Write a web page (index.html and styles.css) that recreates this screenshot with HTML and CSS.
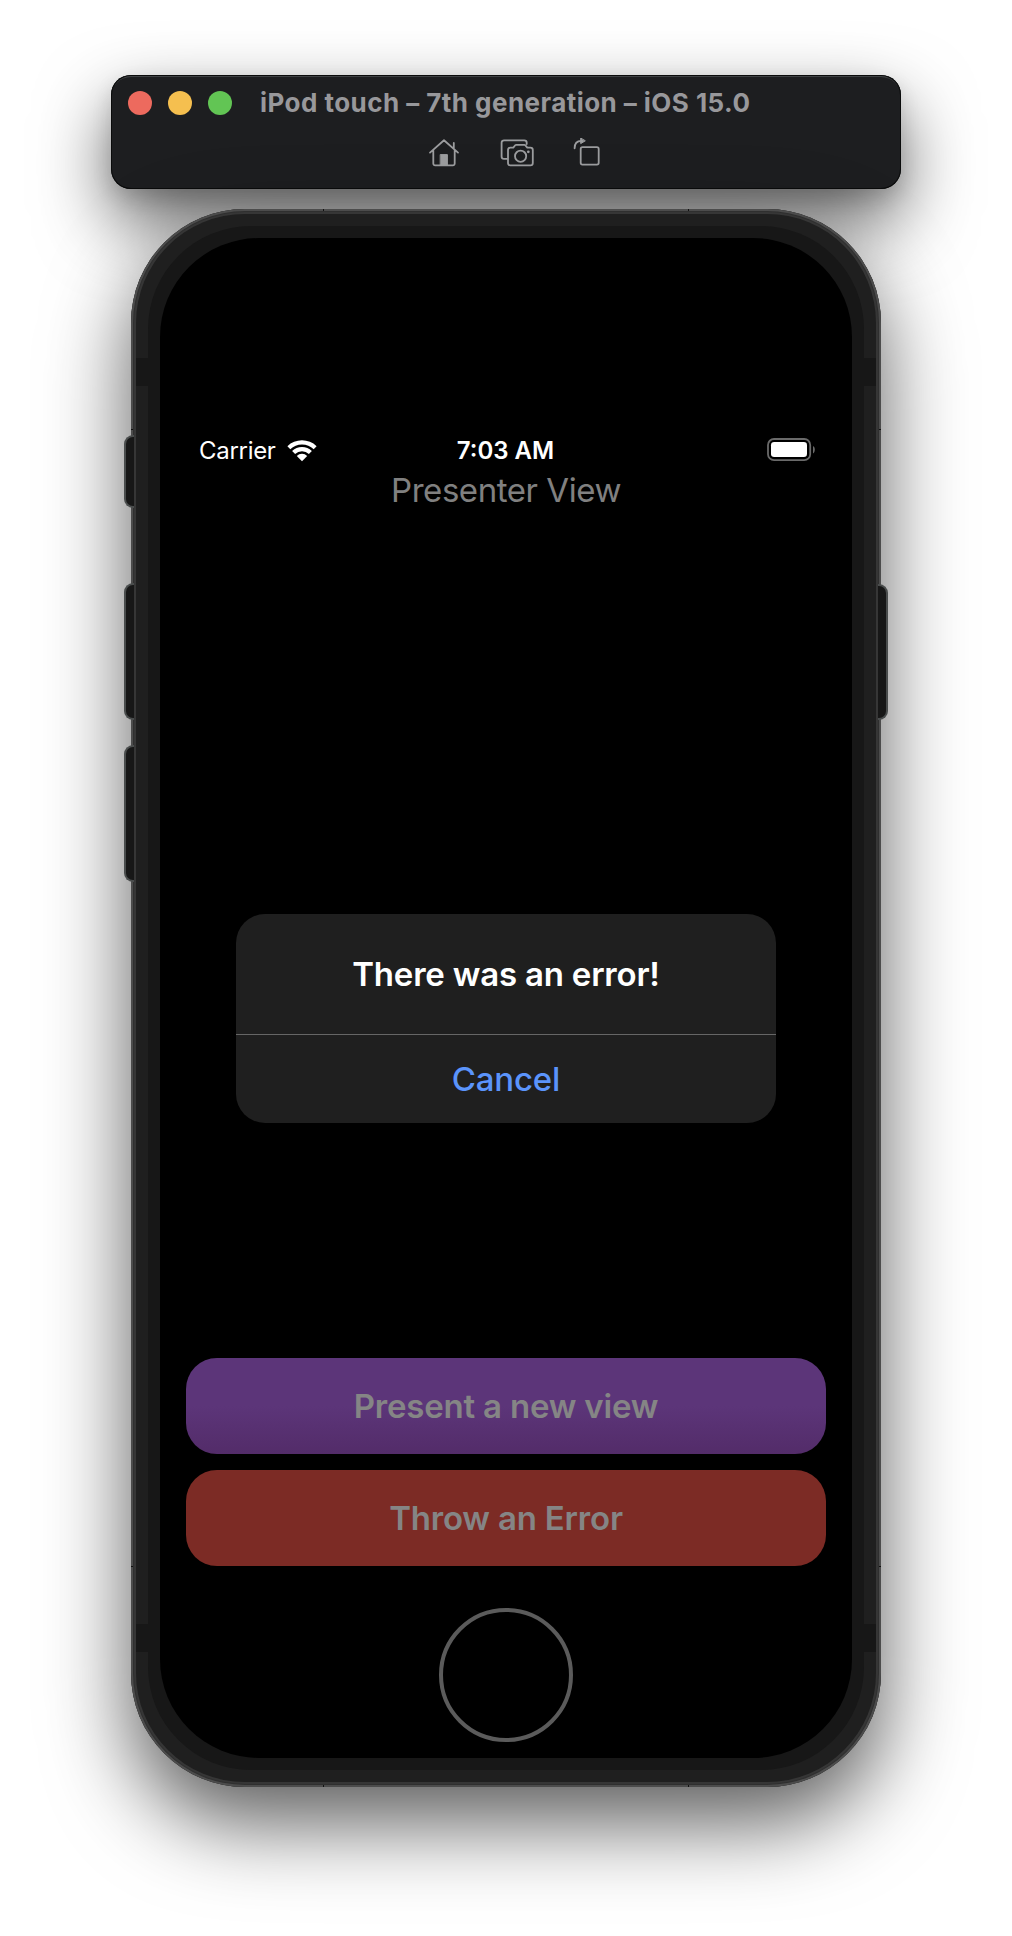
FILE: index.html
```html
<!DOCTYPE html>
<html lang="en">
<head>
<meta charset="utf-8">
<title>iPod touch – 7th generation – iOS 15.0</title>
<link rel="stylesheet" href="styles.css">
</head>
<body>
<main class="simulator">
  <header class="toolbar">
    <div class="title-row">
      <div class="lights">
        <span class="light light-close"></span>
        <span class="light light-minimize"></span>
        <span class="light light-zoom"></span>
      </div>
      <h1 class="window-title">iPod touch – 7th generation – iOS 15.0</h1>
    </div>
    <div class="tools">
      <svg class="tool" width="32" height="30" viewBox="0 0 32 30" fill="none" stroke="#9c9d9f" stroke-width="1.8" stroke-linecap="round" stroke-linejoin="round">
        <path d="M2 14.6 16 2.3 30 14.6M5.3 12.2V25.6a1.8 1.8 0 0 0 1.8 1.8H24.9a1.8 1.8 0 0 0 1.8-1.8V12.2M25.8 10.4V5"/>
        <path d="M12.6 16.6h6.8v10.6h-6.8z" fill="#9c9d9f" stroke-width="1"/>
      </svg>
      <svg class="tool tool-camera" width="36" height="30" viewBox="0 0 36 30" fill="none" stroke="#9c9d9f" stroke-width="1.8" stroke-linecap="round" stroke-linejoin="round">
        <path d="M8 20.9H5a2.4 2.4 0 0 1-2.4-2.4V4.7A2.4 2.4 0 0 1 5 2.3H25.3a2.4 2.4 0 0 1 2.4 2.4V6"/>
        <path d="M11.4 9.6H14.3L16.2 7.3a1.4 1.4 0 0 1 1.1-.5H25.3a1.4 1.4 0 0 1 1.1.5L28.3 9.6H31.4a2.4 2.4 0 0 1 2.4 2.4V25a2.4 2.4 0 0 1-2.4 2.4H11.4A2.4 2.4 0 0 1 9 25V12a2.4 2.4 0 0 1 2.4-2.4z"/>
        <circle cx="21.600" cy="18.2" r="5.6"/>
        <circle cx="29.3" cy="13.8" r="1.4" fill="#9c9d9f" stroke="none"/>
      </svg>
      <svg class="tool tool-rotate" width="28" height="30" viewBox="0 0 28 30" fill="none" stroke="#9c9d9f" stroke-width="1.8" stroke-linecap="round" stroke-linejoin="round">
        <rect x="7.7" y="9.2" width="18" height="17.4" rx="1.8"/>
        <path d="M1.6 10.3C1.6 5.4 4 2.9 8.3 2.9"/>
        <path d="M7.7.4v5.2L12 3z" fill="#9c9d9f" stroke-width="1"/>
      </svg>
    </div>
  </header>

  <section class="phone">
    <span class="key key-left key-mute"></span>
    <span class="key key-left key-up"></span>
    <span class="key key-left key-down"></span>
    <span class="key key-right"></span>
    <span class="seam seam-tl"></span>
    <span class="seam seam-tr"></span>
    <span class="seam seam-bl"></span>
    <span class="seam seam-br"></span>
    <span class="seam seam-side seam-lt"></span>
    <span class="seam seam-side seam-rt"></span>
    <span class="seam seam-side seam-lb"></span>
    <span class="seam seam-side seam-rb"></span>
    <div class="band">
      <span class="antenna antenna-top"></span>
      <span class="antenna antenna-bottom"></span>
      <div class="bezel">
        <div class="screen">
          <div class="status">
            <div class="carrier">
              <span>Carrier</span>
              <svg class="wifi" width="30" height="23" viewBox="0 0 30 23" fill="#fff">
                <path d="M.4 7.2A21 21 0 0 1 29.6 7.2L26.7 10.2A16.7 16.7 0 0 0 3.3 10.2z"/>
                <path d="M5.1 12A14.2 14.2 0 0 1 24.9 12L21.9 15A10 10 0 0 0 8.1 15z"/>
                <path d="M9.8 16.9A7.4 7.4 0 0 1 20.2 16.9L15 22.2z"/>
              </svg>
            </div>
            <span class="clock">7:03 AM</span>
            <svg class="battery" width="49" height="24" viewBox="0 0 49 24">
              <rect x="1" y="1" width="42.2" height="21.2" rx="6" fill="none" stroke="#6a6a6a" stroke-width="1.8"/>
              <rect x="4" y="4" width="36" height="15" rx="3.2" fill="#fff"/>
              <path d="M46 8v7.4c1.4-.8 1.8-2.2 1.8-3.7S47.400 8.800 46 8z" fill="#6a6a6a"/>
            </svg>
          </div>
          <h2 class="heading">Presenter View</h2>
          <div class="actions">
            <button class="action action-present"><span>Present a new view</span></button>
            <button class="action action-error"><span>Throw an Error</span></button>
          </div>
          <div class="home"></div>
          <div class="alert">
            <p class="alert-title"><span>There was an error!</span></p>
            <button class="alert-cancel"><span>Cancel</span></button>
          </div>
        </div>
      </div>
    </div>
  </section>
</main>
</body>
</html>
```
FILE: styles.css
```css
* {
  box-sizing: border-box;
}

body {
  margin: 0;
  background: #fff;
  font-family: Inter, "Liberation Sans", sans-serif;
}

h1, h2, p {
  margin: 0;
}

button {
  padding: 0;
  border: 0;
  background: none;
  font-family: inherit;
}

.simulator {
  display: flex;
  flex-direction: column;
  align-items: center;
  gap: 20px;
  height: 1936px;
  padding-top: 75px;
  overflow: hidden;
}

/* Window title bar */
.toolbar {
  width: 790px;
  height: 114px;
  padding: 1px 17px 0;
  border-radius: 20px;
  background: #1d1e20;
  box-shadow: inset 0 0 0 1px #0a0b0b, inset 0 2px 0 #3f4244, 0 8px 20px rgba(0, 0, 0, .12), 0 32px 72px rgba(0, 0, 0, .62);
}

.title-row {
  display: flex;
  align-items: center;
  height: 54px;
}

.lights {
  display: flex;
  gap: 16px;
}

.light {
  width: 24px;
  height: 24px;
  border-radius: 50%;
}

.light-close { background: #ed6a5e; }
.light-minimize { background: #f5bf4f; }
.light-zoom { background: #62c554; }

.window-title {
  margin-left: 28px;
  color: #98989b;
  font-size: 26px;
  font-weight: 700;
  letter-spacing: .45px;
  line-height: 32px;
  white-space: nowrap;
}

.tools {
  display: flex;
  padding: 8px 0 0 300px;
}

.tool-camera { margin-left: 39px; }
.tool-rotate { margin-left: 38px; }

/* Device body */
.phone {
  position: relative;
  width: 750px;
  height: 1578px;
  padding: 5px;
  border-radius: 114px;
  background: #363636;
  box-shadow: inset 0 0 0 2px #4c4c4c, inset 0 0 0 3px #2f2f2f, 0 36px 84px rgba(0, 0, 0, .64);
}

.band {
  position: relative;
  height: 100%;
  padding: 12px;
  border-radius: 109px;
  background: #1f1f1f;
}

.antenna {
  position: absolute;
  left: 0;
  right: 0;
  height: 28px;
  background: #171717;
}

.antenna-top { top: 144px; }
.antenna-bottom { bottom: 130px; }

.bezel {
  position: relative;
  height: 100%;
  padding: 12px;
  border-radius: 103px;
  background: #171717;
}

.key {
  position: absolute;
  width: 10px;
  border: 2px solid #4a4d4d;
  background: #171717;
}

.key-left {
  left: -7px;
  border-right: 0;
  border-radius: 9px 0 0 9px;
}

.key-right {
  right: -7px;
  top: 375px;
  height: 136px;
  border-left: 0;
  border-radius: 0 9px 9px 0;
}

.key-mute { top: 226px; height: 73px; }
.key-up { top: 374px; height: 137px; }
.key-down { top: 536px; height: 137px; }

.seam {
  position: absolute;
  width: 1px;
  height: 2px;
  background: #111;
}

.seam-tl { left: 192px; top: 0; }
.seam-tr { right: 192px; top: 0; }
.seam-bl { left: 192px; bottom: 0; }
.seam-br { right: 192px; bottom: 0; }
.seam-side { width: 2px; height: 1px; }
.seam-lt { left: 0; top: 220px; }
.seam-rt { right: 0; top: 220px; }
.seam-lb { left: 0; bottom: 220px; }
.seam-rb { right: 0; bottom: 220px; }

/* Screen contents */
.screen {
  position: relative;
  display: flex;
  flex-direction: column;
  height: 100%;
  padding: 198px 26px 16px;
  border-radius: 99px;
  background: #000;
}

.status {
  display: grid;
  grid-template-columns: 1fr auto 1fr;
  align-items: center;
  height: 30px;
  padding: 0 13px;
  color: #fff;
  font-size: 24px;
  line-height: 30px;
}

.carrier {
  display: flex;
  align-items: center;
  gap: 11px;
  letter-spacing: -.3px;
}

.wifi {
  margin-bottom: 2px;
}

.clock {
  margin-left: -1px;
  font-weight: 600;
}

.battery {
  justify-self: end;
  margin: 0 -3px 2px 0;
}

.heading {
  margin-top: 3px;
  color: #808080;
  font-size: 33px;
  font-weight: 400;
  letter-spacing: -.45px;
  line-height: 42px;
  text-align: center;
}

.actions {
  display: grid;
  gap: 16px;
  margin-top: auto;
}

.action {
  height: 96px;
  border-radius: 31px;
  color: #858585;
  font-size: 33px;
  font-weight: 600;
  letter-spacing: -.2px;
  line-height: 40px;
}

.action-present { background: linear-gradient(#5c3579 50%, #532c69); }
.action-error { background: #7c2b25; }

.home {
  width: 134px;
  height: 134px;
  margin: 42px auto 0;
  border: 4px solid #5b5b5b;
  border-radius: 50%;
}

/* Modal above the dimmed view */
.alert {
  position: absolute;
  top: 676px;
  left: 76px;
  width: 540px;
  height: 209px;
  overflow: hidden;
  border-radius: 29px;
  background: #1f1f1f;
  font-size: 33px;
  font-weight: 600;
  letter-spacing: -.2px;
  line-height: 40px;
  text-align: center;
}

.alert-title {
  height: 121px;
  padding-top: 40px;
  border-bottom: 1px solid #666;
  color: #fff;
}

.alert-cancel {
  width: 100%;
  height: 88px;
  color: #5b94fb;
  font-size: 33px;
  font-weight: 500;
  letter-spacing: -.2px;
  line-height: 40px;
}
```
